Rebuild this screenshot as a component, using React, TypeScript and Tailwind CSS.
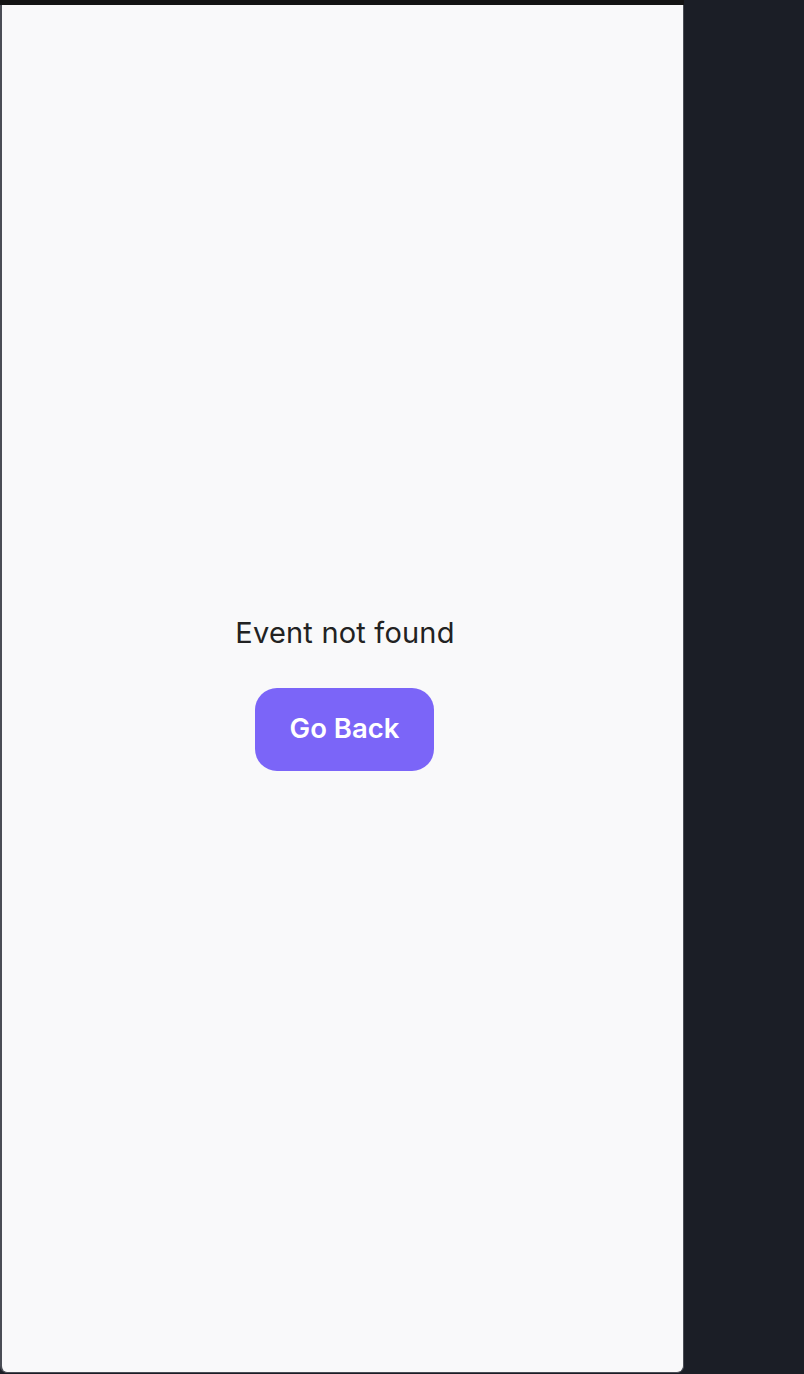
import React from "react";

export default function App() {
  return (
    <div className="flex h-[1374px] w-[804px] bg-[#1b1e26] font-['Inter','Noto_Sans',sans-serif]">
      <div className="flex w-[684px] flex-col">
        <div className="h-[5px] w-full bg-[#141414]" />
        <div className="mb-[1px] flex flex-1 flex-col items-center justify-center rounded-b-[7px] border border-t-0 border-l-[2px] border-[#4a4d55] bg-[#f9f9fa] pl-[5px] pt-[9px]">
          <p className="text-[29px] leading-[34px] tracking-[0.2px] text-[#222222]">Event not found</p>
          <button className="mt-[38px] ml-[-1px] h-[83px] w-[179px] rounded-[22px] bg-[#7b65f8] text-[27.5px] font-semibold text-white">
            Go Back
          </button>
        </div>
      </div>
    </div>
  );
}
